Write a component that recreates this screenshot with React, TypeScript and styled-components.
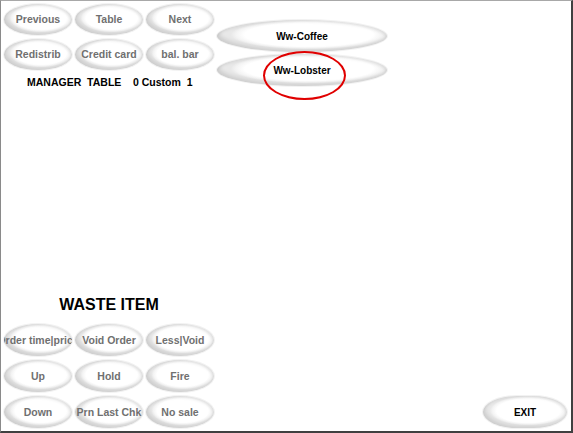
import React from "react"
import styled, { createGlobalStyle } from "styled-components"

const GlobalStyle = createGlobalStyle`
  * { box-sizing: border-box; }
  body {
    margin: 0;
    background: #fff;
    font-family: "Liberation Sans", Arial, sans-serif;
  }
`

const Screen = styled.div`
  width: 573px;
  height: 433px;
  background: #fff;
  border-top: 1px solid #a8a8a8;
  border-left: 1px solid #8a8a8a;
  border-right: 2px solid #404040;
  border-bottom: 2px solid #404040;
  display: grid;
  grid-template-columns: 216px 1fr;
  overflow: hidden;
`

const LeftColumn = styled.div`
  display: flex;
  flex-direction: column;
  justify-content: space-between;
  padding: 3px 0 3px 3px;
`

const RightColumn = styled.div`
  display: flex;
  flex-direction: column;
  justify-content: space-between;
  padding: 19px 4px 3px 0;
`

const ButtonGrid = styled.div<{ $rowH: number; $gap: number }>`
  display: grid;
  grid-template-columns: repeat(3, 68px);
  grid-auto-rows: ${(p) => p.$rowH}px;
  column-gap: 3px;
  row-gap: ${(p) => p.$gap}px;
`

const Oval = styled.button<{ $dark?: boolean; $lift?: number }>`
  position: relative;
  display: flex;
  align-items: center;
  justify-content: center;
  padding: 0 0 ${(p) => p.$lift ?? 0}px;
  margin: 0;
  border: none;
  border-radius: 50%;
  background: radial-gradient(ellipse closest-side at 54% 46%, #fff 82%, #f4f4f4 93%, #e8e8e8 100%);
  box-shadow: inset 3px -3px 4px -1px rgba(0, 0, 0, 0.12), inset -1px 2px 3px rgba(0, 0, 0, 0.07),
    0 0 0 1px #f2f2f2;
  font-family: "Liberation Sans", Arial, sans-serif;
  font-weight: bold;
  font-size: 10.5px;
  color: ${(p) => (p.$dark ? "#000" : "#707070")};
  white-space: nowrap;
  overflow: hidden;
`

const ManagerLine = styled.div`
  margin-top: 6px;
  padding-left: 23px;
  font-size: 10.5px;
  font-weight: bold;
  color: #000;
  white-space: pre;
`

const WasteTitle = styled.div`
  text-align: center;
  width: 210px;
  font-size: 16px;
  line-height: 18px;
  font-weight: bold;
  color: #000;
  margin-bottom: 10px;
`

const ItemList = styled.div`
  display: flex;
  flex-direction: column;
  gap: 2px;
  width: 170px;
`

const ItemButton = styled(Oval)`
  height: 32px;
  overflow: visible;
  font-size: 10px;
`

const Highlight = styled.span`
  position: absolute;
  left: 46px;
  top: -3px;
  width: 83px;
  height: 49px;
  border: 2px solid #e00000;
  border-radius: 50%;
  pointer-events: none;
`

const ExitButton = styled(Oval)`
  align-self: flex-end;
  width: 84px;
  height: 32px;
  border-radius: 40% / 50%;
  font-size: 10px;
`

const topButtons = ["Previous", "Table", "Next", "Redistrib", "Credit card", "bal. bar"]
const bottomButtons = [
  "Order time|price",
  "Void Order",
  "Less|Void",
  "Up",
  "Hold",
  "Fire",
  "Down",
  "Prn Last Chk",
  "No sale",
]

export default function App() {
  return (
    <>
      <GlobalStyle />
      <Screen>
        <LeftColumn>
          <div>
            <ButtonGrid $rowH={31} $gap={4}>
              {topButtons.map((b) => (
                <Oval key={b} $lift={2}>
                  {b}
                </Oval>
              ))}
            </ButtonGrid>
            <ManagerLine>{"MANAGER  TABLE    0 Custom  1"}</ManagerLine>
          </div>
          <div>
            <WasteTitle>WASTE ITEM</WasteTitle>
            <ButtonGrid $rowH={32} $gap={4}>
              {bottomButtons.map((b) => (
                <Oval key={b}>{b}</Oval>
              ))}
            </ButtonGrid>
          </div>
        </LeftColumn>
        <RightColumn>
          <ItemList>
            <ItemButton $dark>Ww-Coffee</ItemButton>
            <ItemButton $dark>
              Ww-Lobster
              <Highlight />
            </ItemButton>
          </ItemList>
          <ExitButton $dark>EXIT</ExitButton>
        </RightColumn>
      </Screen>
    </>
  )
}
